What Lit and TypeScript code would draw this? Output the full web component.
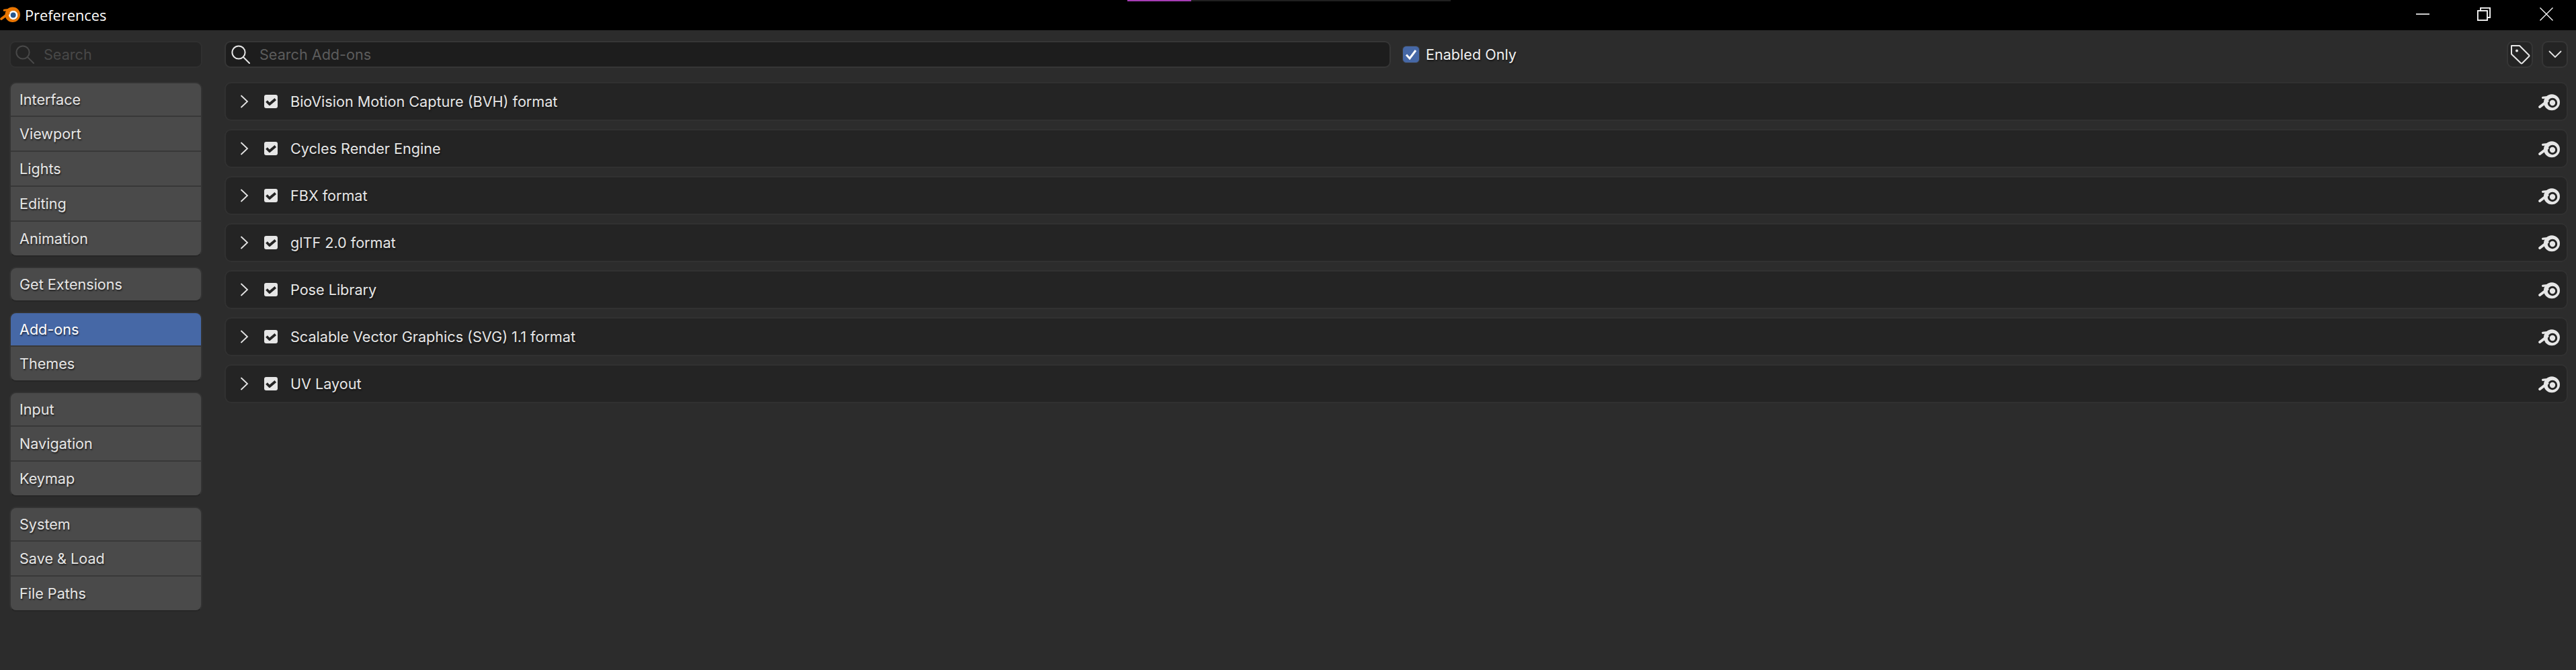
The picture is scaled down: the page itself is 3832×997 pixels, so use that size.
import { LitElement, html, css, svg } from "lit";
import { customElement } from "lit/decorators.js";

const logo = (cls: string, ring: string, eye: string, arm: string) => html`<svg class=${cls} viewBox="0 0 32 26" fill="none" aria-hidden="true">
  ${svg`
  <circle cx="21" cy="14" r="7.4" fill=${ring}/>
  <path fill-rule="evenodd" fill=${arm} d="M32 13.3 A12 12 0 1 1 8 13.3 A12 12 0 1 1 32 13.3 Z M28.2 14 A7.2 7.2 0 1 0 13.8 14 A7.2 7.2 0 1 0 28.2 14 Z"/>
  <circle cx="21" cy="14" r="4.2" fill=${eye}/>
  <path d="M2.2 20 L13.5 11.4" stroke=${arm} stroke-width="4" stroke-linecap="round"/>
  <path d="M6.6 6.4 L18 5" stroke=${arm} stroke-width="3.2" stroke-linecap="round"/>`}
</svg>`;

const search = html`<svg class="search-ic" viewBox="0 0 28 28" fill="none" stroke="currentColor" stroke-width="2" stroke-linecap="round">
  <circle cx="11" cy="11" r="9.6"/><path d="M18 18 L27 27"/></svg>`;

const groups: { label: string; active?: boolean }[][] = [
  [{ label: "Interface" }, { label: "Viewport" }, { label: "Lights" }, { label: "Editing" }, { label: "Animation" }],
  [{ label: "Get Extensions" }],
  [{ label: "Add-ons", active: true }, { label: "Themes" }],
  [{ label: "Input" }, { label: "Navigation" }, { label: "Keymap" }],
  [{ label: "System" }, { label: "Save & Load" }, { label: "File Paths" }],
];

const addons = [
  "BioVision Motion Capture (BVH) format",
  "Cycles Render Engine",
  "FBX format",
  "glTF 2.0 format",
  "Pose Library",
  "Scalable Vector Graphics (SVG) 1.1 format",
  "UV Layout",
];

@customElement("app-root")
export class AppRoot extends LitElement {
  static styles = css`
    :host {
      display: flex;
      flex-direction: column;
      width: 3832px;
      height: 997px;
      overflow: hidden;
      background: #2c2c2c;
      font-family: Inter, "Liberation Sans", sans-serif;
      font-size: 21.6px;
      color: #e6e6e6;
    }
    .titlebar {
      position: relative;
      flex: none;
      height: 45px;
      background: #000;
      display: flex;
      align-items: center;
      color: #fff;
      font-family: "Open Sans", "Noto Sans", sans-serif;
      font-size: 21.8px;
    }
    .app-logo { width: 30px; height: 25px; margin: 0 7px 0 0; position: relative; top: -1px; }
    .progress {
      position: absolute;
      left: 1677px;
      top: 0;
      width: 481px;
      height: 2px;
      background: #1f1f1f;
    }
    .progress-fill { display: block; height: 100%; background: #a63cb4; }
    .win {
      margin-left: auto;
      display: flex;
      align-items: center;
      gap: 71px;
      padding-right: 34px;
      position: relative;
      top: -2px;
    }
    .win svg { width: 20px; height: 20px; display: block; }
    .win svg:last-child { margin-left: 2px; }
    .content {
      flex: 1;
      display: grid;
      grid-template-columns: 287px 1fr;
      column-gap: 33px;
      padding: 16px 12px 0 14px;
      align-items: start;
    }
    .side, .main { display: flex; flex-direction: column; }
    .side-search, .main-search {
      box-sizing: border-box;
      height: 40px;
      display: flex;
      align-items: center;
      border-radius: 9px;
    }
    .side-search {
      background: #242424;
      border: 2px solid #303030;
      padding-left: 7px;
      color: #484848;
      margin-bottom: 21px;
    }
    .search-ic { width: 28px; height: 28px; flex: none; margin-right: 14px; }
    .groups { display: flex; flex-direction: column; gap: 15px; }
    .group {
      display: flex;
      flex-direction: column;
      gap: 2px;
      border: 2px solid #333;
      border-bottom-color: #262626;
      background: #383838;
      border-radius: 10px;
      overflow: hidden;
    }
    .item {
      height: 50px;
      display: flex;
      align-items: center;
      padding-left: 13px;
      background: #4a4a4a;
      text-shadow: 1px 2px 2px rgba(0, 0, 0, 0.55);
    }
    .item:first-child { height: 48px; }
    .item.active { background: #4668a6; color: #fff; }
    .top-row {
      display: flex;
      align-items: center;
      margin-bottom: 21px;
      height: 40px;
    }
    .main-search {
      width: 1735px;
      background: #1d1d1d;
      border: 2px solid #363636;
      padding-left: 8px;
      color: #5c5c5c;
    }
    .main-search .search-ic { color: #e6e6e6; }
    .enabled {
      display: flex;
      align-items: center;
      margin-left: 17px;
      color: #f0f0f0;
      text-shadow: 1px 2px 2px rgba(0, 0, 0, 0.5);
    }
    .enabled-box {
      box-sizing: border-box;
      width: 26px;
      height: 26px;
      border: 1px solid #3a3a3a;
      border-radius: 6px;
      background: #4668a6;
      margin-right: 9px;
      display: flex;
      align-items: center;
      justify-content: center;
    }
    .enabled-box svg { width: 18px; height: 18px; }
    .tools { margin-left: auto; display: flex; gap: 13px; }
    .tool {
      box-sizing: border-box;
      width: 39px;
      height: 40px;
      background: #242424;
      border: 2px solid #363636;
      border-radius: 9px;
      display: flex;
      align-items: center;
      justify-content: center;
    }
    .tag-ic { width: 30px; height: 30px; }
    .down-ic { width: 20px; height: 12px; }
    .rows { display: flex; flex-direction: column; gap: 12px; }
    .row {
      box-sizing: border-box;
      height: 58px;
      display: flex;
      align-items: center;
      background: #242424;
      border: 2px solid #313131;
      border-radius: 10px;
      padding-left: 21px;
      padding-right: 10px;
      text-shadow: 1px 2px 2px rgba(0, 0, 0, 0.5);
    }
    .chev { width: 13px; height: 20px; margin-right: 23px; flex: none; }
    .check {
      width: 20px;
      height: 20px;
      background: #e6e6e6;
      border-radius: 3px;
      display: flex;
      align-items: center;
      justify-content: center;
      margin-right: 19px;
      flex: none;
    }
    .check svg { width: 16px; height: 12px; }
    .row-logo { width: 32px; height: 26px; margin-left: auto; position: relative; top: 1px; }
  `;

  render() {
    return html`
      <div class="titlebar">
        ${logo("app-logo", "#fff", "#26568f", "#ea7600")}
        <span>Preferences</span>
        <div class="progress"><span class="progress-fill" style="width:95px"></span></div>
        <div class="win">
          <svg viewBox="0 0 20 20" stroke="#fff" stroke-width="1.6" fill="none"><path d="M0 10 H20"/></svg>
          <svg viewBox="0 0 20 20" stroke="#fff" stroke-width="1.8" fill="none"><rect x="0.9" y="5" width="14.1" height="14.1"/><path d="M5 5 V0.9 H19.1 V15 H15"/></svg>
          <svg viewBox="0 0 20 20" stroke="#fff" stroke-width="1.3" fill="none"><path d="M0.5 0.5 L19.5 19.5 M19.5 0.5 L0.5 19.5"/></svg>
        </div>
      </div>
      <div class="content">
        <aside class="side">
          <div class="side-search">${search}<span>Search</span></div>
          <nav class="groups">
            ${groups.map(
              (g) => html`<div class="group">
                ${g.map((i) => html`<div class="item ${i.active ? "active" : ""}">${i.label}</div>`)}
              </div>`
            )}
          </nav>
        </aside>
        <main class="main">
          <div class="top-row">
            <div class="main-search">${search}<span>Search Add-ons</span></div>
            <div class="enabled">
              <span class="enabled-box"><svg viewBox="0 0 18 18" fill="none" stroke="#fff" stroke-width="3"><path d="M2 9.5 L7 15 L16 3"/></svg></span>
              Enabled Only
            </div>
            <div class="tools">
              <div class="tool"><svg class="tag-ic" viewBox="0 0 30 30" fill="none" stroke="#e6e6e6" stroke-width="2" stroke-linejoin="round"><path d="M2 2 H14 L28 16 Q29 17 28 18 L18 28 Q17 29 16 28 L2.5 15 Q2 14.5 2 14 Z"/><circle cx="10" cy="9.5" r="2" fill="#e6e6e6" stroke="none"/></svg></div>
              <div class="tool"><svg class="down-ic" viewBox="0 0 20 12" fill="none" stroke="#e6e6e6" stroke-width="1.8" stroke-linecap="round"><path d="M1.5 1.5 L10 10 L18.5 1.5"/></svg></div>
            </div>
          </div>
          <div class="rows">
            ${addons.map(
              (a) => html`<div class="row">
                <svg class="chev" viewBox="0 0 13 20" fill="none" stroke="#e6e6e6" stroke-width="1.8" stroke-linecap="round"><path d="M2 1.5 L11 10 L2 18.5"/></svg>
                <span class="check"><svg viewBox="0 0 16 12" fill="none" stroke="#242424" stroke-width="3.8"><path d="M1.5 5.5 L6 10 L14.8 2.5"/></svg></span>
                <span>${a}</span>
                ${logo("row-logo", "#242424", "#e6e6e6", "#e6e6e6")}
              </div>`
            )}
          </div>
        </main>
      </div>
    `;
  }
}
